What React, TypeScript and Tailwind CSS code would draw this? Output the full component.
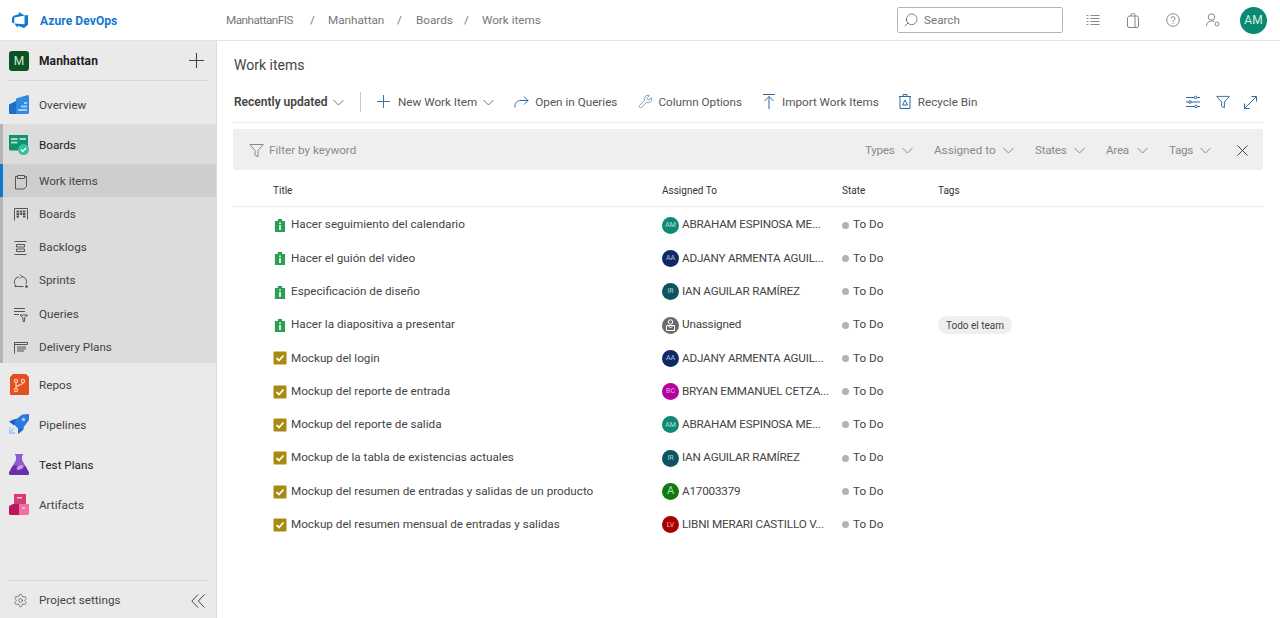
import type { ReactNode } from 'react';
import { Wrench, Settings, Search } from 'lucide-react';

const line = { fill: 'none', stroke: 'currentColor', strokeWidth: 1 };

function Chevron({ className = 'text-[#8a8a8a]' }: { className?: string }) {
    return (
        <svg width="11" height="7" viewBox="0 0 11 7" className={className} {...line}>
            <path d="M.5 1l5 5 5-5" />
        </svg>
    );
}

function PlusIcon({ size, className }: { size: number; className?: string }) {
    return (
        <svg width={size} height={size} viewBox="0 0 14 14" className={className} {...line}>
            <path d="M7 0v14M0 7h14" />
        </svg>
    );
}

function Funnel({ className, size = 15 }: { className?: string; size?: number }) {
    return (
        <svg width={size} height={size} viewBox="0 0 15 15" className={className} {...line}>
            <path d="M.8 1.5h13.4L9 7.5v6.200l-3-1.600V7.500z" />
        </svg>
    );
}

function AzureLogo() {
    return (
        <svg width="18" height="18" viewBox="0 0 18 18" fill="#0f78d0">
            <path d="M17 4v9.740l-4 3.280-6.200-2.260V17l-3.510-4.590 10.230.8V4.440zm-3.410.49L7.850 1v2.290L2.580 4.840 1 6.870v4.610l2.260 1V6.570z" />
        </svg>
    );
}

function OverviewIcon() {
    return (
        <svg width="20" height="20" viewBox="0 0 20 20">
            <path d="M0 9.500 7 6v13H1.500A1.500 1.500 0 0 1 0 17.500z" fill="#1a6fc9" />
            <path d="M7 3.500 18 .2a1.500 1.500 0 0 1 2 1.400V17.500a1.500 1.500 0 0 1-1.500 1.500H7z" fill="#2f8ae0" />
            <path d="M9 14h9v2H9zM12 10.500h6v2h-6zM15 7h3v2h-3z" fill="#9ccdf5" />
        </svg>
    );
}

function BoardsIcon() {
    return (
        <svg width="20" height="20" viewBox="0 0 20 20">
            <path d="M0 0h19v15.500H1.500A1.500 1.500 0 0 1 0 14z" fill="#158f71" />
            <path d="M2 3h6.500v2H2zM2 6.500h6.500v2H2zM10.500 3H17v2h-6.500z" fill="#9fdcc8" />
            <circle cx="14.500" cy="14.500" r="5.500" fill="#32c29a" />
            <path d="M12 14.600l1.800 1.800 3.200-3.400" fill="none" stroke="#fff" strokeWidth="1.400" />
        </svg>
    );
}

function ReposIcon() {
    return (
        <svg width="19" height="21" viewBox="0 0 19 21">
            <path d="M3 0h13l3 3v16.500a1.500 1.500 0 0 1-1.500 1.500h-16A1.500 1.500 0 0 1 0 19.500V3z" fill="#e2501f" />
            <g fill="none" stroke="#ffc9b0" strokeWidth="1.200">
                <circle cx="6" cy="7" r="1.600" />
                <circle cx="13" cy="7" r="1.600" />
                <circle cx="6" cy="16" r="1.600" />
                <path d="M6 8.600v5.800M13 8.600c0 3-7 2-7 5" />
            </g>
        </svg>
    );
}

function PipelinesIcon() {
    return (
        <svg width="20" height="20" viewBox="0 0 20 20">
            <path d="M0 7.500 6 5h4l-5 6.500z" fill="#1a5fc0" />
            <path d="M14.500 9v6a2 2 0 0 1-1 1.500L9 20v-5.500z" fill="#1f68cc" />
            <path d="M6 6 13 .8a2 2 0 0 1 1-.3L20 0v5.500a2 2 0 0 1-.5 1.200L14 14l-5 .5-3.500-3.500z" fill="#2b78e0" />
            <circle cx="14.500" cy="5.500" r="1.700" fill="#a5cdf5" />
            <path d="M0 13h1.600v3.500l3-3 1.200 1.200-3.200 3.200H6V20H0z" fill="#a9cdf2" />
        </svg>
    );
}

function TestPlansIcon() {
    return (
        <svg width="20" height="21" viewBox="0 0 20 21">
            <path d="M6 0h8v1.600h-1V6l6.800 12.200A1.800 1.800 0 0 1 18.200 21H1.800A1.800 1.800 0 0 1 .2 18.200L7 6V1.600H6z" fill="#8f5bd0" />
            <path d="M3.500 12C8 10 12 14.500 16.500 12L19.800 18.200A1.800 1.800 0 0 1 18.200 21H1.800A1.800 1.800 0 0 1 .2 18.200z" fill="#6a2ea8" />
            <ellipse cx="11" cy="13.500" rx="3.600" ry="2" transform="rotate(-25 11 13.500)" fill="#c59be8" />
        </svg>
    );
}

function ArtifactsIcon() {
    return (
        <svg width="20" height="21" viewBox="0 0 20 21">
            <path d="M5 0h12v10H5z" fill="#d93a74" />
            <path d="M0 12 4 10h6v11H1.500A1.500 1.500 0 0 1 0 19.500z" fill="#b9195c" />
            <path d="M10 10h10v9.500a1.500 1.500 0 0 1-1.500 1.500H10z" fill="#f16fa5" />
            <path d="M8 3h5v1.400H8zM13 13h3v1.400h-3z" fill="#f9c2d8" />
        </svg>
    );
}

const subIcons: Record<string, ReactNode> = {
    'Work items': (
        <svg width="14" height="16" viewBox="0 0 14 16" {...line}>
            <path d="M3.500 2.500H1.500v12.500h8.500l2.500-2.500V2.500h-2M3.500 1.500h7v3h-7z" />
        </svg>
    ),
    Boards: (
        <svg width="14" height="13" viewBox="0 0 14 13" {...line}>
            <path d="M.5 12.500V.5h13v11" />
            <path d="M2.500 3.500h2.500M5.800 3.500h2.500M9 3.500h2.500M2.500 6h2.500M5.800 6h2.500M9 6h2.500M2.500 8.500h2.500M9 8.500h2.500" strokeWidth="1.800" />
        </svg>
    ),
    Backlogs: (
        <svg width="13" height="14" viewBox="0 0 13 14" {...line}>
            <path d="M.5.500h12M.5 13.500h12M2.500 3.500h8v2.500h-8zM2.500 8h8v2.500h-8z" />
        </svg>
    ),
    Sprints: (
        <svg width="15" height="15" viewBox="0 0 15 15" {...line}>
            <path d="M2 12A5.300 5.300 0 0 1 5 2.800M8 2.500A5.300 5.300 0 0 1 12 10M.5 12.500h9" />
            <path d="M6 .5 8 2.500 6 4.500" />
            <circle cx="12.500" cy="12.500" r="1" fill="currentColor" />
        </svg>
    ),
    Queries: (
        <svg width="14" height="14" viewBox="0 0 14 14" {...line}>
            <path d="M0 .5h11M0 3.500h11M0 6.500h5M6 7h7.500l-3 3v3.500h-1.500V10z" />
        </svg>
    ),
    'Delivery Plans': (
        <svg width="14" height="12" viewBox="0 0 14 12" {...line}>
            <path d="M.5 11.500V.5h13v2H.5M3 5h9M3 7h9M3 9h7" />
        </svg>
    ),
};

function NavRow({ icon, label, strong }: { icon: ReactNode; label: string; strong?: boolean }) {
    return (
        <div className="flex h-10 items-center gap-[10px] pl-[9px] pt-[2px]">
            <div className="flex w-5 justify-center">{icon}</div>
            <span className={`pt-[2px] ${strong ? 'text-[#222]' : 'text-[#444]'}`}>{label}</span>
        </div>
    );
}

function SubRow({ label, active }: { label: string; active?: boolean }) {
    return (
        <div
            className={`flex items-center pt-[2px] text-[#444] ${
                active ? 'h-[33px] border-l-[3px] border-[#0f78d0] bg-[#cecece] pl-[11px] text-[#222]' : 'h-[33.3px] pl-[14px]'
            }`}
        >
            <div className="flex w-[25px] items-center text-[#555]">{subIcons[label]}</div>
            <span>{label}</span>
        </div>
    );
}

function Sidebar() {
    return (
        <aside className="flex w-[217px] flex-none flex-col border-r border-[#dcdcdc] bg-[#eaeaea] text-[11.7px]">
            <div className="mx-[8px] flex h-[40px] items-center justify-between border-b border-[#d6d6d6] pl-px pr-[4px]">
                <div className="flex items-center gap-[10px]">
                    <div className="flex h-5 w-5 items-center justify-center rounded-[3px] bg-[#0b5323] text-[12px] text-[#cfe5d6]">M</div>
                    <span className="text-[12px] font-bold tracking-[0.1px] text-[#222]">Manhattan</span>
                </div>
                <PlusIcon size={15} className="text-[#444]" />
            </div>
            <div className="mt-[3px]">
                <NavRow icon={<OverviewIcon />} label="Overview" />
            </div>
            <div className="bg-[#dcdcdc]">
                <div className="border-l-[3px] border-[#b4b4b4]">
                    <div className="-ml-[3px]">
                        <NavRow icon={<BoardsIcon />} label="Boards" strong />
                    </div>
                </div>
                <SubRow label="Work items" active />
                <div className="border-l-[3px] border-[#b4b4b4]">
                    <div className="-ml-[3px]">
                        <SubRow label="Boards" />
                        <SubRow label="Backlogs" />
                        <SubRow label="Sprints" />
                        <SubRow label="Queries" />
                        <SubRow label="Delivery Plans" />
                    </div>
                </div>
            </div>
            <NavRow icon={<ReposIcon />} label="Repos" />
            <NavRow icon={<PipelinesIcon />} label="Pipelines" />
            <NavRow icon={<TestPlansIcon />} label="Test Plans" strong />
            <NavRow icon={<ArtifactsIcon />} label="Artifacts" />
            <div className="mx-[8px] mt-auto flex h-[38px] items-center justify-between border-t border-[#d6d6d6] pl-[5px] pr-[3px] pt-[2px] text-[#444]">
                <div className="flex items-center">
                    <Settings size={15} strokeWidth={1} className="mr-[11px]" />
                    <span>Project settings</span>
                </div>
                <svg width="14" height="14" viewBox="0 0 14 14" {...line}>
                    <path d="M7 .5.800 7 7 13.500M13.500.5 7.300 7l6.200 6.500" />
                </svg>
            </div>
        </aside>
    );
}

function TopBar() {
    return (
        <header className="flex h-[41px] flex-none items-center border-b border-[#e4e4e4] bg-white pl-[11px] pr-[13px] text-[11.7px]">
            <AzureLogo />
            <span className="ml-[11px] w-[186px] pt-px text-[12px] font-bold tracking-[0.1px] text-[#0f78d0]">Azure DevOps</span>
            <nav className="flex items-center pt-[2px] text-[#777]">
                <span className="w-[84px] tracking-[-0.5px]">ManhattanFIS</span>
                <span className="w-[18px]">/</span>
                <span className="w-[69px]">Manhattan</span>
                <span className="w-[19px]">/</span>
                <span className="w-[48px]">Boards</span>
                <span className="w-[18px]">/</span>
                <span>Work items</span>
            </nav>
            <div className="ml-auto flex h-[26px] w-[166px] items-center gap-[5px] rounded-[2px] border-[1.5px] border-[#b5b5b5] pl-[5px] text-[#777]">
                <Search size={16} strokeWidth={1} className="-scale-x-100 text-[#444]" />
                <span className="pt-[2px]">Search</span>
            </div>
            <div className="ml-[23px] flex items-center text-[#888]">
                <svg width="14" height="11" viewBox="0 0 14 11" {...line} className="mr-[27px]">
                    <path d="M4.500.5h9M4.500 3.500h9M4.500 6.500h9M4.500 9.500h9M.5.500h2M.5 3.500h2M.5 6.500h2M.5 9.500h2" />
                </svg>
                <svg width="12" height="15" viewBox="0 0 12 15" {...line} className="mr-[27px]">
                    <path d="M.5 4.500 2 3h8.500l1 1.500V13a1.500 1.500 0 0 1-1.500 1.500H2A1.500 1.500 0 0 1 .5 13zM4 3V1.800A1.300 1.300 0 0 1 5.300.5h1.400A1.300 1.300 0 0 1 8 1.800V14" />
                </svg>
                <svg width="14" height="14" viewBox="0 0 14 14" {...line} className="mr-[26px]">
                    <circle cx="7" cy="7" r="6.300" />
                    <path d="M5.200 5.500a1.900 1.900 0 1 1 2.800 1.700c-.7.400-1 .7-1 1.400M7 10v1" />
                </svg>
                <svg width="14" height="14" viewBox="0 0 14 14" {...line} className="mr-[20px]">
                    <circle cx="5.500" cy="4" r="3.200" />
                    <path d="M.5 13c0-3 2-5 5-5 1 0 2 .2 2.600.6" />
                    <circle cx="11" cy="11" r="2" />
                </svg>
            </div>
            <div className="flex h-[27px] w-[27px] items-center justify-center rounded-full bg-[#0a8a70] text-[12px] text-[#d5efe8]">AM</div>
        </header>
    );
}

function Action({ icon, label, gap = 'gap-[6px]', className }: { icon: ReactNode; label: string; gap?: string; className?: string }) {
    return (
        <div className={`flex items-center ${gap} ${className ?? ''}`}>
            <span className="flex text-[#2f6aa3]">{icon}</span>
            <span className="pt-px">{label}</span>
        </div>
    );
}

function Toolbar() {
    return (
        <div className="flex h-[41px] flex-none items-center border-b border-[#ececec] pl-px text-[11.7px] text-[#555]">
            <span className="w-[93px] whitespace-nowrap text-[12px] font-semibold text-[#444]">Recently updated</span>
            <Chevron className="ml-[6px] text-[#777]" />
            <div className="mx-[16px] h-5 w-px bg-[#c8c8c8]" />
            <Action icon={<PlusIcon size={13} />} label="New Work Item" gap="gap-[8px]" />
            <Chevron className="ml-[6px] mr-[20px] text-[#777]" />
            <Action
                icon={
                    <svg width="15" height="13" viewBox="0 0 15 13" {...line}>
                        <path d="M1 12.500C.5 8 3 5.500 7 5.500h7M10 1.500l4 4-4 4" />
                    </svg>
                }
                label="Open in Queries"
                className="mr-[21px]"
            />
            <Action icon={<Wrench size={15} strokeWidth={1} />} label="Column Options" gap="gap-[5px]" className="mr-[21px]" />
            <Action
                icon={
                    <svg width="12" height="15" viewBox="0 0 12 15" {...line}>
                        <path d="M0 .5h12M6 15V2.500M1.500 7 6 2.500 10.500 7" />
                    </svg>
                }
                label="Import Work Items"
                gap="gap-[7px]"
                className="mr-[20px]"
            />
            <Action
                icon={
                    <svg width="12" height="15" viewBox="0 0 12 15" {...line}>
                        <path d="M0 2.500h12M4 2.500V.5h4v2M1 2.500v12h10v-12M3.500 11 6 6l2.500 5z" />
                    </svg>
                }
                label="Recycle Bin"
                gap="gap-[7px]"
            />
            <div className="ml-auto flex items-center pr-[6px] text-[#2f6aa3]">
                <svg width="14" height="14" viewBox="0 0 14 14" {...line} className="mr-[16px]">
                    <path d="M0 2.500h14M0 7h14M0 11.500h14" />
                    <circle cx="9.500" cy="2.500" r="1.300" fill="#fff" />
                    <circle cx="4" cy="7" r="1.300" fill="#fff" />
                    <circle cx="10" cy="11.500" r="1.300" fill="#fff" />
                </svg>
                <Funnel size={14} className="mr-[14px]" />
                <svg width="13" height="13" viewBox="0 0 13 13" {...line}>
                    <path d="M.5 12.500 12.500.5M7.500.5h5v5M.5 7.500v5h5" />
                </svg>
            </div>
        </div>
    );
}

const pickers = [
    { label: 'Types', width: 'w-[29px] tracking-[-0.3px]' },
    { label: 'Assigned to', width: 'w-[61px]' },
    { label: 'States', width: 'w-[31px] tracking-[-0.3px]' },
    { label: 'Area', width: 'w-[23px] tracking-[-0.3px]' },
    { label: 'Tags', width: 'w-[23px] tracking-[-0.3px]' },
];

function FilterBar() {
    return (
        <div className="mt-[6px] flex h-[41px] flex-none items-center rounded-[2px] bg-[#efefef] pl-[16px] pr-[15px] pt-[2px] text-[11.7px] text-[#8a8a8a]">
            <Funnel className="mr-[5px] text-[#8a8a8a]" />
            <span>Filter by keyword</span>
            <div className="ml-auto flex items-center gap-[21px]">
                {pickers.map((p) => (
                    <div key={p.label} className="flex items-center gap-[8px]">
                        <span className={`${p.width} whitespace-nowrap`}>{p.label}</span>
                        <Chevron />
                    </div>
                ))}
            </div>
            <svg width="11" height="11" viewBox="0 0 11 11" {...line} className="ml-[26px] text-[#444]">
                <path d="M.5.500l10 10M10.500.500l-10 10" />
            </svg>
        </div>
    );
}

const avatars: Record<string, { bg: string; initials: string }> = {
    abraham: { bg: 'bg-[#0e8a74]', initials: 'AM' },
    adjany: { bg: 'bg-[#0b2a66]', initials: 'AA' },
    ian: { bg: 'bg-[#0c5460]', initials: 'IR' },
    bryan: { bg: 'bg-[#b4009e]', initials: 'BC' },
    a17: { bg: 'bg-[#107c10]', initials: 'A' },
    libni: { bg: 'bg-[#a80000]', initials: 'LV' },
};

const rows = [
    { title: 'Hacer seguimiento del calendario', kind: 'story', who: 'abraham', name: 'ABRAHAM ESPINOSA ME...' },
    { title: 'Hacer el guión del video', kind: 'story', who: 'adjany', name: 'ADJANY ARMENTA AGUIL...' },
    { title: 'Especificación de diseño', kind: 'story', who: 'ian', name: 'IAN AGUILAR RAMÍREZ' },
    { title: 'Hacer la diapositiva a presentar', kind: 'story', who: '', name: 'Unassigned', tag: 'Todo el team' },
    { title: 'Mockup del login', kind: 'task', who: 'adjany', name: 'ADJANY ARMENTA AGUIL...' },
    { title: 'Mockup del reporte de entrada', kind: 'task', who: 'bryan', name: 'BRYAN EMMANUEL CETZA...' },
    { title: 'Mockup del reporte de salida', kind: 'task', who: 'abraham', name: 'ABRAHAM ESPINOSA ME...' },
    { title: 'Mockup de la tabla de existencias actuales', kind: 'task', who: 'ian', name: 'IAN AGUILAR RAMÍREZ' },
    { title: 'Mockup del resumen de entradas y salidas de un producto', kind: 'task', who: 'a17', name: 'A17003379' },
    { title: 'Mockup del resumen mensual de entradas y salidas', kind: 'task', who: 'libni', name: 'LIBNI MERARI CASTILLO V...' },
];

function KindIcon({ kind }: { kind: string }) {
    if (kind === 'story') {
        return (
            <svg width="14" height="14" viewBox="0 0 14 14">
                <path d="M1 3h3.500V1h5v2H13v11H1z" transform="translate(1 0) scale(.85 1)" fill="#2f9e55" />
                <path d="M6.200 4.500h1.600V6H6.200zM6.200 7h1.600v5H6.200z" fill="#fff" />
            </svg>
        );
    }
    return (
        <svg width="14" height="14" viewBox="0 0 14 14">
            <rect width="13" height="13" x=".5" y=".5" rx="1" fill="#a88a10" />
            <path d="M3.500 7.200 6 9.500l4.500-5" fill="none" stroke="#fff" strokeWidth="1.800" />
        </svg>
    );
}

function Avatar({ who }: { who: string }) {
    if (!who) {
        return (
            <div className="flex h-[17px] w-[17px] flex-none items-center justify-center rounded-full bg-[#6b6b6b]">
                <svg width="11" height="12" viewBox="0 0 11 12" fill="none" stroke="#fff" strokeWidth="1">
                    <circle cx="5.500" cy="3" r="2.200" />
                    <path d="M1.500 6.500h8v5h-8zM3 6.500 5.500 9 8 6.500" />
                </svg>
            </div>
        );
    }
    const a = avatars[who];
    return (
        <div className={`flex h-[17px] w-[17px] flex-none items-center justify-center rounded-full text-[7px] text-white/70 ${a.bg}`}>
            <span className={who === 'a17' ? 'text-[11px]' : ''}>{a.initials}</span>
        </div>
    );
}

function WorkItemsTable() {
    return (
        <div className="text-[11.7px] text-[#444]">
            <div className="grid h-[37px] grid-cols-[429px_180px_96px_1fr] items-center border-b border-[#ececec] pt-[5px] text-[10px] text-[#333]">
                <span className="pl-[40px]">Title</span>
                <span>Assigned To</span>
                <span>State</span>
                <span>Tags</span>
            </div>
            <div className="pt-px">
                {rows.map((r) => (
                    <div key={r.title} className="grid h-[33.3px] grid-cols-[429px_180px_96px_1fr] items-center pt-px">
                        <div className="flex items-center gap-[4px] pl-[40px]">
                            <KindIcon kind={r.kind} />
                            <span>{r.title}</span>
                        </div>
                        <div className="flex items-center gap-[3px]">
                            <Avatar who={r.who} />
                            <span className="whitespace-nowrap tracking-[-0.2px]">{r.name}</span>
                        </div>
                        <div className="flex items-center gap-[4px]">
                            <span className="h-[7px] w-[7px] rounded-full bg-[#b3b3b3]" />
                            <span>To Do</span>
                        </div>
                        <div>
                            {r.tag && <span className="inline-flex h-[18px] items-center rounded-full bg-[#efefef] px-[8px] text-[10px]">{r.tag}</span>}
                        </div>
                    </div>
                ))}
            </div>
        </div>
    );
}

export default function App() {
    return (
        <div className="flex h-[618px] w-[1280px] flex-col overflow-hidden bg-white font-['Roboto','Noto_Sans',sans-serif]">
            <TopBar />
            <div className="flex min-h-0 flex-1">
                <Sidebar />
                <main className="flex min-w-0 flex-1 flex-col pl-[16px] pr-[17px]">
                    <h1 className="flex h-[41px] flex-none items-end pb-[6px] pl-px text-[14px] font-normal text-[#444]">Work items</h1>
                    <Toolbar />
                    <FilterBar />
                    <WorkItemsTable />
                </main>
            </div>
        </div>
    );
}
